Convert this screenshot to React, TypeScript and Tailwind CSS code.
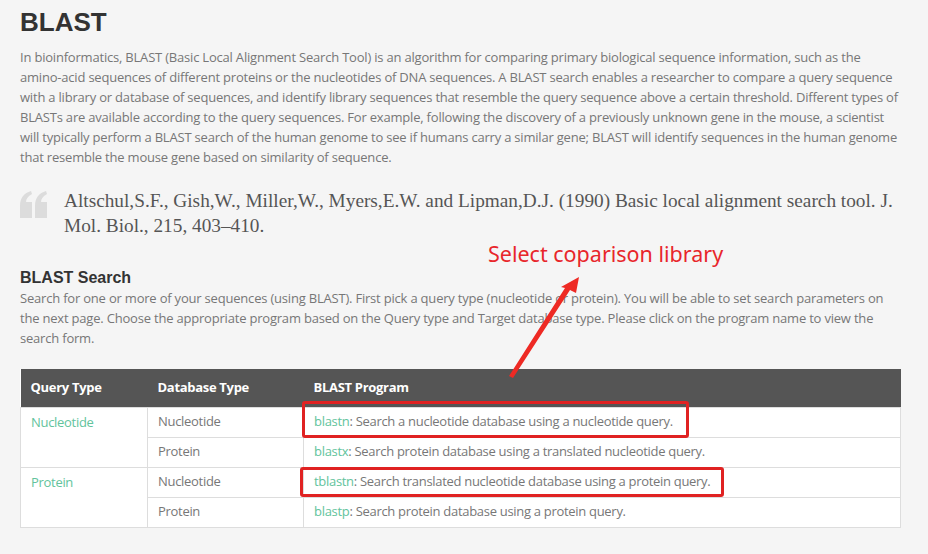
import React from 'react'

const rows = [
  { query: 'Nucleotide', db: 'Nucleotide', prog: 'blastn', desc: 'Search a nucleotide database using a nucleotide query.', first: true },
  { query: 'Nucleotide', db: 'Protein', prog: 'blastx', desc: 'Search protein database using a translated nucleotide query.', first: false },
  { query: 'Protein', db: 'Nucleotide', prog: 'tblastn', desc: 'Search translated nucleotide database using a protein query.', first: true },
  { query: 'Protein', db: 'Protein', prog: 'blastp', desc: 'Search protein database using a protein query.', first: false },
]

function QuoteMark() {
  return (
    <svg width="28" height="28" viewBox="0 0 28 28" className="shrink-0">
      <path d="M0 27 V15 C0 7 4 2 11 0 L12 3 C8 5 6 8 6 11 H12 V27 Z" fill="#dcdcdc" />
      <path d="M15 27 V15 C15 7 19 2 26 0 L27 3 C23 5 21 8 21 11 H27 V27 Z" fill="#dcdcdc" />
    </svg>
  )
}

export default function App() {
  return (
    <div className="relative w-[928px] h-[554px] overflow-hidden bg-[#f5f5f5] px-[20px] font-['Open_Sans',sans-serif] tracking-[-0.2px]">
      <h1 className="mt-[4px] text-[26px] leading-[36px] font-bold text-[#333] tracking-normal font-['Liberation_Sans',Arial,sans-serif]">
        BLAST
      </h1>
      <p className="mt-[7px] w-[884px] text-[13px] leading-[20px] text-[#777]">
        In bioinformatics, BLAST (Basic Local Alignment Search Tool) is an algorithm for comparing primary biological sequence information, such as the amino-acid sequences of different proteins or the nucleotides of DNA sequences. A BLAST search enables a researcher to compare a query sequence with a library or database of sequences, and identify library sequences that resemble the query sequence above a certain threshold. Different types of BLASTs are available according to the query sequences. For example, following the discovery of a previously unknown gene in the mouse, a scientist will typically perform a BLAST search of the human genome to see if humans carry a similar gene; BLAST will identify sequences in the human genome that resemble the mouse gene based on similarity of sequence.
      </p>

      <div className="mt-[21px] flex gap-[16px]">
        <div className="pt-[3px]">
          <QuoteMark />
        </div>
        <p className="whitespace-nowrap text-[19.3px] leading-[25px] text-[#555] tracking-normal font-['Liberation_Serif',Georgia,serif]">
          Altschul,S.F., Gish,W., Miller,W., Myers,E.W. and Lipman,D.J. (1990) Basic local alignment search tool. J.
          <br />
          Mol. Biol., 215, 403–410.
        </p>
      </div>

      <h2 className="mt-[30px] text-[16px] leading-[20px] font-bold text-[#333] tracking-normal font-['Liberation_Sans',Arial,sans-serif]">
        BLAST Search
      </h2>
      <p className="w-[876px] text-[13px] leading-[20px] text-[#777]">
        Search for one or more of your sequences (using BLAST). First pick a query type (nucleotide or protein). You will be able to set search parameters on the next page. Choose the appropriate program based on the Query type and Target database type. Please click on the program name to view the search form.
      </p>

      <table className="mt-[21px] w-[881px] border-collapse bg-white text-[13px] text-[#777] tracking-[-0.3px]">
        <thead>
          <tr className="h-[38px] bg-[#555] text-left text-white">
            <th className="w-[127px] px-[10px] font-bold">Query Type</th>
            <th className="w-[156px] px-[10px] font-bold">Database Type</th>
            <th className="px-[10px] font-bold">BLAST Program</th>
          </tr>
        </thead>
        <tbody>
          {rows.map((r) => (
            <tr key={r.prog} className="h-[30px]">
              {r.first && (
                <td rowSpan={2} className="border border-[#ddd] px-[10px] align-top pt-[5px] text-[#62c39c]">
                  {r.query}
                </td>
              )}
              <td className="border border-[#ddd] px-[10px]">{r.db}</td>
              <td className="border border-[#ddd] px-[10px]">
                <span className="text-[#62c39c]">{r.prog}</span>: {r.desc}
              </td>
            </tr>
          ))}
        </tbody>
      </table>

      {/* annotation overlay */}
      <div className="absolute left-[488px] top-[238px] text-[21.5px] leading-[32px] text-[#e8262b] tracking-normal font-['Noto_Sans',sans-serif]">
        Select coparison library
      </div>
      <svg className="absolute left-0 top-0" width="928" height="554">
        <polygon
          points="579,277 576,293 570,290 513,378 509,376 565,288 561,287"
          fill="#ee2a24"
        />
      </svg>
      <div className="absolute left-[302px] top-[401px] w-[387px] h-[37px] rounded-[3px] border-[3px] border-[#e02222]" />
      <div className="absolute left-[300px] top-[467px] w-[424px] h-[30px] rounded-[3px] border-[3px] border-[#e02222]" />
    </div>
  )
}
